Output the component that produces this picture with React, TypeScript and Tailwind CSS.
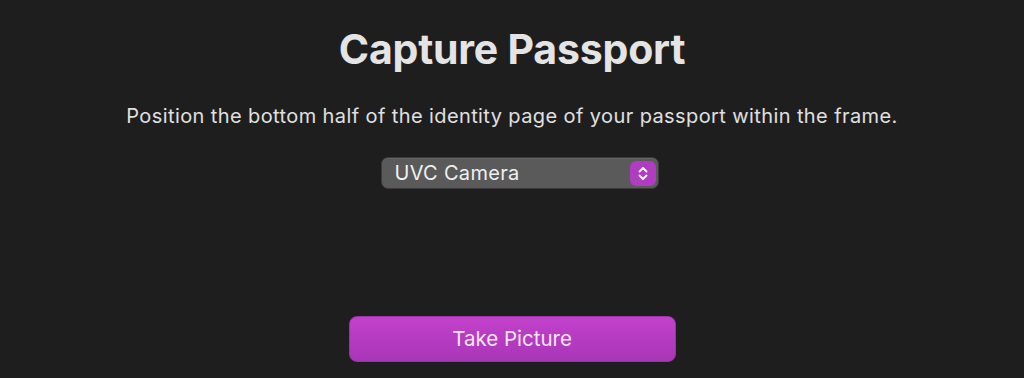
export default function App() {
  return (
    <div
      className="w-[1024px] h-[378px] bg-[#1e1e1e] flex flex-col items-center text-[#e6e6e6]"
      style={{ fontFamily: "Inter, 'Noto Sans', sans-serif" }}
    >
      <h1 className="mt-[24px] text-[41px] leading-[50px] font-bold tracking-[-0.2px] text-[#e4e4e4]">
        Capture Passport
      </h1>
      <p className="mt-[30px] text-[20px] leading-[24px] tracking-[0.4px] text-[#e0e0e0]">
        Position the bottom half of the identity page of your passport within the frame.
      </p>
      <div className="mt-[29px] ml-[15px] w-[278px] h-[32px] rounded-[7px] bg-[#5a5a5a] border border-[#3a3a3a] flex items-center justify-between pl-[13px] pr-[2px] shadow-[inset_0_1px_0_rgba(255,255,255,0.08)]">
        <span className="text-[20px] leading-none tracking-[0.3px] text-[#f0f0f0]">UVC Camera</span>
        <div className="w-[26px] h-[25px] rounded-[6px] bg-[#b03cc2] flex items-center justify-center">
          <svg width="12" height="17" viewBox="0 0 12 17" fill="none" stroke="white" strokeWidth="1.8" strokeLinecap="round" strokeLinejoin="round">
            <path d="M2.5 6.5 L6 3 L9.5 6.5" />
            <path d="M2.5 10.5 L6 14 L9.5 10.5" />
          </svg>
        </div>
      </div>
      <button className="mt-[127px] w-[327px] h-[46px] rounded-[8px] bg-gradient-to-b from-[#c341cc] to-[#a836b6] text-[20.5px] text-[#f4e6f6] border border-[#9b30a8]">
        Take Picture
      </button>
    </div>
  );
}
